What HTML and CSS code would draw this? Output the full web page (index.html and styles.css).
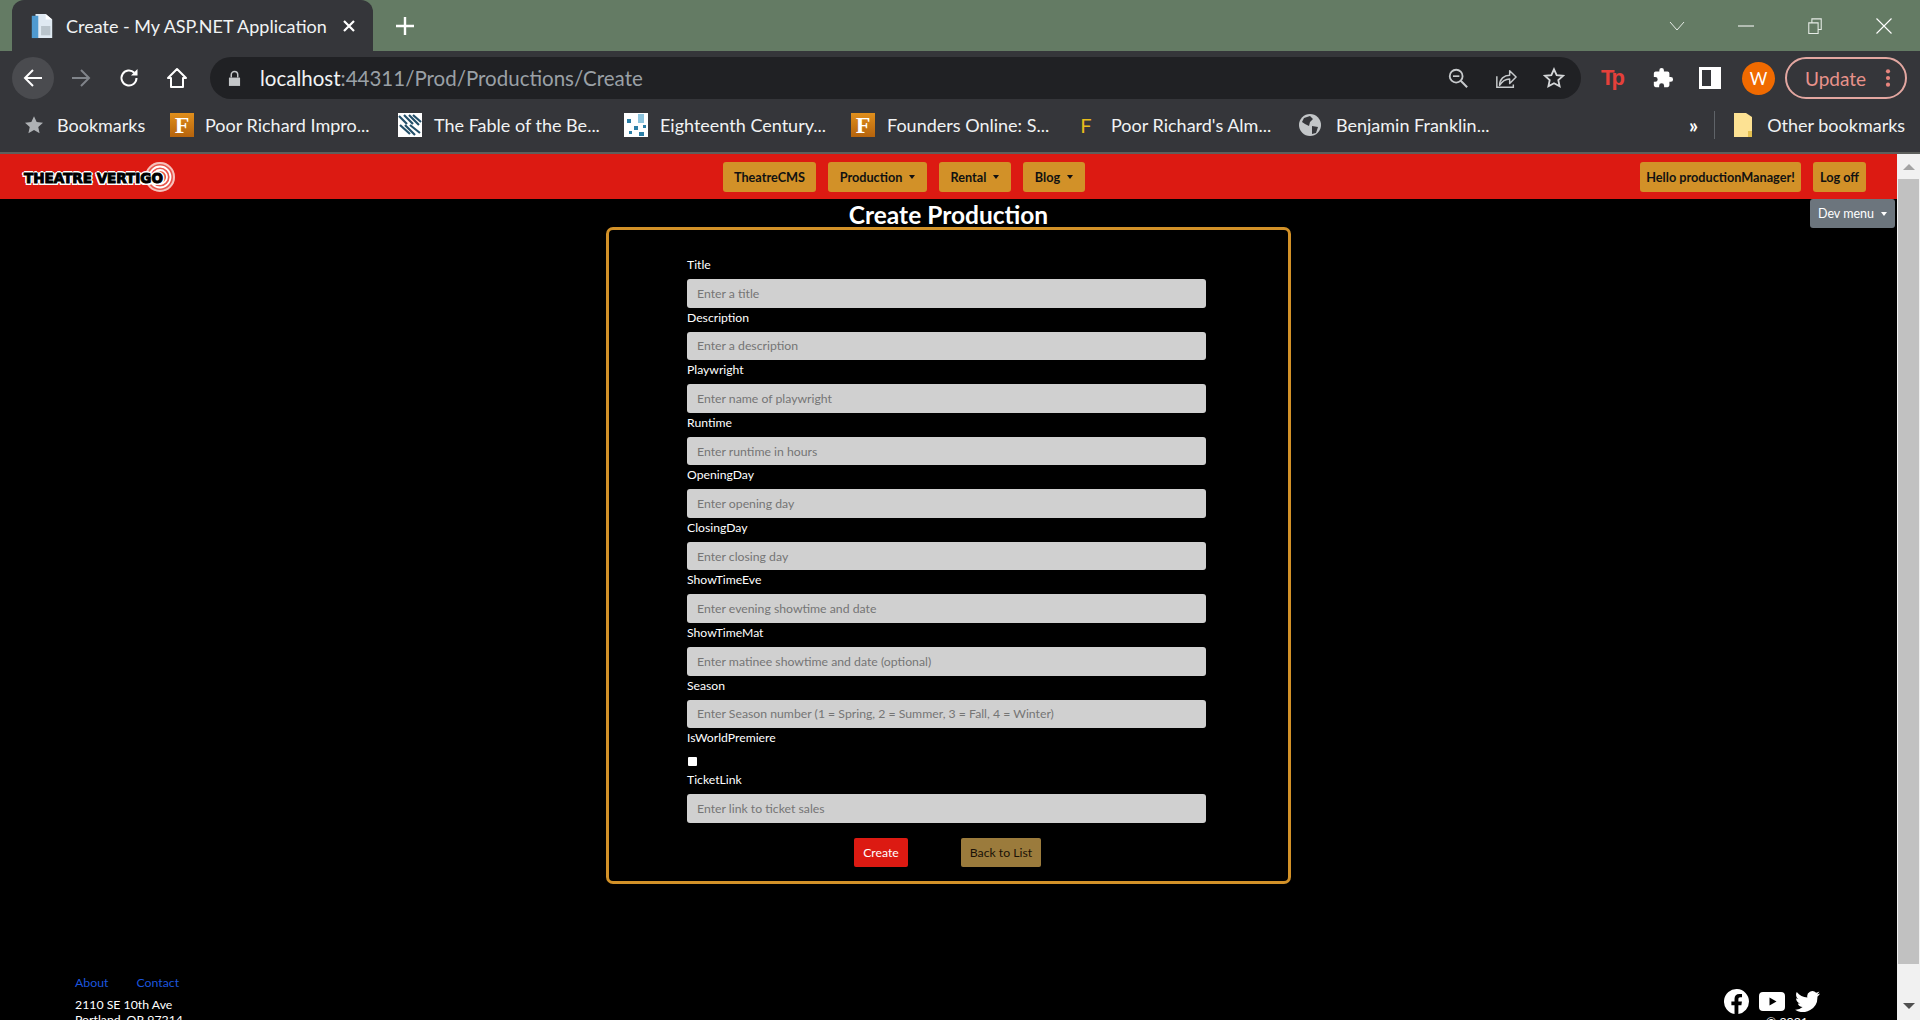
FILE: index.html
```html
<!DOCTYPE html>
<html lang="en">
<head>
  <meta charset="UTF-8" />
  <title>Create - My ASP.NET Application</title>
  <link rel="stylesheet" href="styles.css">
</head>
<body>
  <div class="tabstrip">
    <div class="tab">
      <svg class="tab-icon" viewBox="0 0 24 28"><path fill="#dfe9f2" d="M5 1h11l7 6v20H5z"/><path fill="#4f9ad0" d="M1 3h7v24H1z"/><path fill="#b9c4cc" d="M11 14h10v10H11z"/><path fill="#fff" d="M16 1l7 6h-7z"/></svg>
      <span class="tab-title">Create - My ASP.NET Application</span>
      <svg class="tab-close" viewBox="0 0 14 14"><path d="M2 2l10 10M12 2L2 12" stroke="#fff" stroke-width="2.2"/></svg>
    </div>
    <svg class="new-tab" viewBox="0 0 18 18"><path d="M9 0v18M0 9h18" stroke="#fff" stroke-width="2.4"/></svg>
    <div class="win-controls">
      <svg viewBox="0 0 16 10" class="win-chevron"><path d="M1 1l7 8 7-8" fill="none" stroke="#e6ece6" stroke-width="1"/></svg>
      <svg viewBox="0 0 16 16" class="win-btn"><path d="M0 8h16" stroke="#fff" stroke-width="1"/></svg>
      <svg viewBox="0 0 16 18" class="win-btn"><path d="M1 5.500h10.500v12H1zM4.500 5V1H15v12h-3.500" fill="none" stroke="#e6ece6" stroke-width="1.200"/></svg>
      <svg viewBox="0 0 16 16" class="win-btn"><path d="M0.500 0.500l15 15M15.500 0.500l-15 15" stroke="#fff" stroke-width="1.100"/></svg>
    </div>
  </div>

  <div class="toolbar">
    <div class="tool-btn tool-active">
      <svg viewBox="0 0 24 24" class="tool-icon"><path d="M21 12H4M12 4l-8 8 8 8" fill="none" stroke="#fff" stroke-width="2"/></svg>
    </div>
    <div class="tool-btn">
      <svg viewBox="0 0 24 24" class="tool-icon"><path d="M3 12h17M12 4l8 8-8 8" fill="none" stroke="#80848a" stroke-width="2"/></svg>
    </div>
    <div class="tool-btn">
      <svg viewBox="0 0 24 24" class="tool-icon"><path d="M19.500 12a7.500 7.500 0 1 1-2.200-5.300" fill="none" stroke="#fff" stroke-width="2"/><path d="M20.500 3v6.500H14z" fill="#fff"/></svg>
    </div>
    <div class="tool-btn">
      <svg viewBox="0 0 24 24" class="tool-icon"><path d="M12 3L3 12h3v9h12v-9h3z" fill="none" stroke="#fff" stroke-width="2" stroke-linejoin="round"/></svg>
    </div>
    <div class="omnibox">
      <svg viewBox="0 0 14 18" class="lock"><path d="M1 8h12v9H1z" fill="#c4c7c9"/><path d="M3.500 8V5a3.500 3.500 0 0 1 7 0v3" fill="none" stroke="#c4c7c9" stroke-width="1.600"/></svg>
      <span class="url"><span class="url-host">localhost</span>:44311/Prod/Productions/Create</span>
      <div class="omni-icons">
        <svg viewBox="0 0 24 24" class="omni-icon"><circle cx="10" cy="10" r="7" fill="none" stroke="#c7cacc" stroke-width="2"/><path d="M15 15l7 7" stroke="#c7cacc" stroke-width="2.200"/><path d="M6.500 10h7" stroke="#c7cacc" stroke-width="1.800"/></svg>
        <svg viewBox="0 0 24 24" class="omni-icon"><path d="M2 10v12h18v-3" fill="none" stroke="#c7cacc" stroke-width="1.600"/><path d="M5 20c0-7 5-11 11-11V4l7 7-7 7v-5c-5 0-8 2-11 7z" fill="none" stroke="#c7cacc" stroke-width="1.600" stroke-linejoin="round"/></svg>
        <svg viewBox="0 0 24 24" class="omni-icon"><path d="M12 2.500l2.900 6.300 6.900.8-5.100 4.700 1.400 6.800-6.100-3.400-6.100 3.400 1.400-6.800L2.200 9.600l6.900-.8z" fill="none" stroke="#d5d7d9" stroke-width="2"/></svg>
      </div>
    </div>
    <div class="ext-icons">
      <span class="ext-tp">Tp</span>
      <svg viewBox="0 0 24 24" class="ext-icon"><path fill="#fff" d="M20.500 11H19V7a2 2 0 0 0-2-2h-4V3.500a2.500 2.500 0 0 0-5 0V5H4a2 2 0 0 0-2 2v3.800h1.500a2.700 2.700 0 0 1 0 5.400H2V20a2 2 0 0 0 2 2h3.800v-1.500a2.700 2.700 0 0 1 5.400 0V22H17a2 2 0 0 0 2-2v-4h1.500a2.500 2.500 0 0 0 0-5z"/></svg>
      <svg viewBox="0 0 22 22" class="ext-icon"><path fill="#fff" fill-rule="evenodd" d="M0 0h22v22H0zM3 3v16h9V3z"/></svg>
      <span class="avatar">W</span>
      <div class="update">
        <span>Update</span>
        <svg viewBox="0 0 6 24" class="update-dots"><circle cx="3" cy="4" r="2.500"/><circle cx="3" cy="12" r="2.500"/><circle cx="3" cy="20" r="2.500"/></svg>
      </div>
    </div>
  </div>

  <div class="bookmarks">
    <div class="bm bm-first">
      <svg viewBox="0 0 24 24" class="bm-star"><path fill="#aeb1b4" d="M12 1.500l3.200 7 7.600.8-5.700 5.100 1.600 7.500L12 18.100l-6.700 3.800 1.600-7.500-5.700-5.100 7.600-.8z"/></svg>
      <span class="bm-text bm-w-bookmarks">Bookmarks</span>
    </div>
    <div class="bm">
      <span class="fav-f">F</span>
      <span class="bm-text bm-w-a">Poor Richard Impro...</span>
    </div>
    <div class="bm">
      <svg viewBox="0 0 24 24" class="fav"><path fill="#fff" d="M0 0h24v24H0z"/><path d="M1 3l8 8M6 2l9 9M11 2l10 10M15 2l8 7M2 12l10 9M7 12l10 10M12 12l10 8" stroke="#24506a" stroke-width="2.200"/></svg>
      <span class="bm-text bm-w-b">The Fable of the Be...</span>
    </div>
    <div class="bm">
      <svg viewBox="0 0 24 24" class="fav"><path fill="#fff" d="M0 0h24v24H0z"/><path fill="#8cc4de" d="M14 1h6v9h-6z"/><path fill="#2b7ea6" d="M3 6h4v4H3zM10 13h4v4h-4zM15 19h5v4h-5zM5 18h3v3H5zM19 12h3v3h-3z"/></svg>
      <span class="bm-text bm-w-c">Eighteenth Century...</span>
    </div>
    <div class="bm">
      <span class="fav-f">F</span>
      <span class="bm-text bm-w-d">Founders Online: S...</span>
    </div>
    <div class="bm">
      <span class="fav-thin">F</span>
      <span class="bm-text bm-w-e">Poor Richard's Alm...</span>
    </div>
    <div class="bm">
      <svg viewBox="0 0 24 24" class="fav"><circle cx="12" cy="12" r="11" fill="#c3c6c8"/><path fill="#35363a" d="M6 5l6-2 3 3-3 3-1 4-4-2-3-2zM14 13l6 1-2 6-4 1z"/></svg>
      <span class="bm-text bm-w-f">Benjamin Franklin...</span>
    </div>
    <span class="bm-more">»</span>
    <span class="bm-sep"></span>
    <div class="bm">
      <svg viewBox="0 0 18 24" class="bm-folder"><path fill="#fde293" d="M0 0h12l6 4v20H0z"/><path fill="#e4c04f" d="M14 18h4v6h-4z"/></svg>
      <span class="bm-text bm-w-other">Other bookmarks</span>
    </div>
  </div>

  <div class="window">
    <div class="page">
      <nav class="navbar">
        <a class="brand">
          <svg viewBox="0 0 32 32" class="brand-mark"><circle cx="16" cy="16" r="15" fill="#e8564d"/><circle cx="16" cy="16" r="14" fill="none" stroke="#f6c2bc" stroke-width="2"/><circle cx="16" cy="16" r="10.500" fill="none" stroke="#fff" stroke-width="1.800"/><circle cx="16" cy="16" r="7" fill="none" stroke="#fff" stroke-width="1.800"/></svg>
          <span class="brand-text">THEATRE VERTIGO</span>
        </a>
        <div class="nav-main">
          <a class="nav-btn nav-w-cms">TheatreCMS</a>
          <a class="nav-btn nav-w-prod caret">Production</a>
          <a class="nav-btn nav-w-rental caret">Rental</a>
          <a class="nav-btn nav-w-blog caret">Blog</a>
        </div>
        <div class="nav-user">
          <a class="nav-btn nav-w-hello">Hello productionManager!</a>
          <a class="nav-btn nav-w-logoff">Log off</a>
        </div>
      </nav>

      <button class="dev-menu caret" type="button">Dev menu</button>

      <main class="content">
        <h2 class="page-title">Create Production</h2>
        <form class="create-form">
          <div class="field">
            <label>Title</label>
            <input type="text" placeholder="Enter a title" />
          </div>
          <div class="field">
            <label>Description</label>
            <input type="text" placeholder="Enter a description" />
          </div>
          <div class="field">
            <label>Playwright</label>
            <input type="text" placeholder="Enter name of playwright" />
          </div>
          <div class="field">
            <label>Runtime</label>
            <input type="text" placeholder="Enter runtime in hours" />
          </div>
          <div class="field">
            <label>OpeningDay</label>
            <input type="text" placeholder="Enter opening day" />
          </div>
          <div class="field">
            <label>ClosingDay</label>
            <input type="text" placeholder="Enter closing day" />
          </div>
          <div class="field">
            <label>ShowTimeEve</label>
            <input type="text" placeholder="Enter evening showtime and date" />
          </div>
          <div class="field">
            <label>ShowTimeMat</label>
            <input type="text" placeholder="Enter matinee showtime and date (optional)" />
          </div>
          <div class="field">
            <label>Season</label>
            <input type="text" placeholder="Enter Season number (1 = Spring, 2 = Summer, 3 = Fall, 4 = Winter)" />
          </div>
          <div class="field">
            <label>IsWorldPremiere</label>
            <div class="check-row"><span class="check"></span></div>
          </div>
          <div class="field">
            <label>TicketLink</label>
            <input type="text" placeholder="Enter link to ticket sales" />
          </div>
          <div class="form-actions">
            <button class="btn-create" type="button">Create</button>
            <a class="btn-back">Back to List</a>
          </div>
        </form>
      </main>

      <footer class="footer">
        <div class="footer-left">
          <div class="footer-links"><a>About</a><a>Contact</a></div>
          <div class="address">2110 SE 10th Ave<br>Portland, OR 97214</div>
        </div>
        <div class="footer-right">
          <div class="social">
            <svg viewBox="0 0 24 24" class="social-fb"><path fill="#fff" d="M24 12a12 12 0 1 0-13.900 11.900v-8.400H7.100V12h3V9.400c0-3 1.800-4.700 4.500-4.700 1.300 0 2.700.2 2.700.2v3h-1.500c-1.500 0-2 .9-2 1.900V12h3.400l-.5 3.500h-2.900v8.400A12 12 0 0 0 24 12z"/></svg>
            <svg viewBox="0 0 26 19" class="social-yt"><path fill="#fff" fill-rule="evenodd" d="M4 0h18a4 4 0 0 1 4 4v11a4 4 0 0 1-4 4H4a4 4 0 0 1-4-4V4a4 4 0 0 1 4-4zM10.500 5.500v8l7-4z"/></svg>
            <svg viewBox="0 0 24 20" class="social-tw"><path fill="#fff" d="M24 2.400c-.9.400-1.800.7-2.800.8 1-.6 1.800-1.600 2.200-2.700-1 .6-2 1-3.100 1.200A4.900 4.900 0 0 0 11.900 6.200C7.800 6 4.200 4 1.700.9.400 3.200 1 6.100 3.200 7.500c-.8 0-1.600-.2-2.200-.6 0 2.400 1.600 4.400 3.900 4.900-.7.200-1.500.2-2.200.1.600 2 2.400 3.400 4.600 3.400A9.900 9.900 0 0 1 0 17.800 13.900 13.900 0 0 0 21.500 5.400c1-.7 1.800-1.600 2.500-3z"/></svg>
          </div>
          <div class="copyright">© 2021</div>
        </div>
      </footer>
    </div>

    <div class="scrollbar">
      <span class="scroll-up"></span>
      <span class="scroll-thumb"></span>
      <span class="scroll-down"></span>
    </div>
  </div>
</body>
</html>
```

FILE: styles.css
```css
*, *::before, *::after { box-sizing: border-box; }
html, body {
  height: 100%;
  margin: 0;
  overflow: hidden;
}
body {
  display: flex;
  flex-direction: column;
  background-color: #000;
  font-family: Lato, "Open Sans", sans-serif;
  color: #fff;
}

/* browser chrome */
.tabstrip {
  height: 51px;
  flex: none;
  display: flex;
  align-items: flex-start;
  background-color: #647b64;
}
.tab {
  width: 361px;
  height: 51px;
  margin-left: 12px;
  padding: 0 17px 0 18px;
  display: flex;
  align-items: center;
  background-color: #35363a;
  border-radius: 12px 12px 0 0;
}
.tab-icon { width: 24px; height: 26px; }
.tab-title {
  margin-left: 12px;
  font-size: 18px;
  white-space: nowrap;
  color: #f1f3f4;
}
.tab-close {
  width: 14px;
  height: 14px;
  margin-left: auto;
}
.new-tab {
  width: 18px;
  height: 18px;
  margin: 17px 0 0 23px;
}
.win-controls {
  margin-left: auto;
  height: 51px;
  display: flex;
  align-items: center;
  padding-right: 28px;
}
.win-chevron { width: 16px; height: 10px; margin-right: 53px; }
.win-btn { width: 16px; height: 16px; margin-left: 53px; }
.win-chevron + .win-btn { margin-left: 0; }

.toolbar {
  height: 52px;
  flex: none;
  display: flex;
  align-items: center;
  padding: 2px 0 0 12px;
  background-color: #35363a;
}
.tool-btn {
  width: 42px;
  height: 42px;
  margin-right: 6px;
  display: flex;
  align-items: center;
  justify-content: center;
  border-radius: 50%;
}
.tool-active { background-color: #4a4b4f; }
.tool-icon { width: 24px; height: 24px; }
.omnibox {
  width: 1371px;
  height: 42px;
  margin-left: 6px;
  padding: 0 16px 0 18px;
  display: flex;
  align-items: center;
  background-color: #202124;
  border-radius: 21px;
}
.lock { width: 13px; height: 17px; }
.url {
  margin-left: 19px;
  font-size: 20.500px;
  color: #9aa0a6;
  white-space: nowrap;
}
.url-host { color: #f1f3f4; }
.omni-icons {
  margin-left: auto;
  display: flex;
  gap: 26px;
}
.omni-icon { width: 22px; height: 22px; }
.ext-icons {
  display: flex;
  align-items: center;
  margin-left: 20px;
}
.ext-tp {
  width: 26px;
  font-family: "Liberation Sans", sans-serif;
  font-size: 22px;
  font-weight: 700;
  color: #e5403a;
  letter-spacing: -3px;
}
.ext-icon { width: 22px; height: 22px; margin-left: 25px; }
.avatar {
  width: 33px;
  height: 33px;
  margin-left: 21px;
  display: flex;
  align-items: center;
  justify-content: center;
  background-color: #f06a00;
  border-radius: 50%;
  font-size: 17px;
}
.update {
  width: 122px;
  height: 42px;
  margin-left: 10px;
  padding: 0 14px 0 18px;
  display: flex;
  align-items: center;
  justify-content: space-between;
  border: 2px solid #e3a7a1;
  border-radius: 21px;
  font-size: 19px;
  color: #e8928b;
}
.update-dots { width: 6px; height: 20px; fill: #e8857e; }

.bookmarks {
  height: 51px;
  flex: none;
  display: flex;
  align-items: center;
  padding: 0 0 5px 24px;
  background-color: #35363a;
  border-bottom: 2px solid #5d5f5c;
}
.bm {
  display: flex;
  align-items: center;
  margin-left: 25px;
}
.bm-first { margin-left: 0; }
.bm-star { width: 20px; height: 20px; }
.bm-text {
  margin-left: 11px;
  font-size: 18px;
  white-space: nowrap;
  color: #f1f3f4;
}
.bm-w-bookmarks { width: 88px; margin-left: 13px; }
.bm-w-a { width: 168px; }
.bm-w-b { width: 165px; margin-left: 12px; }
.bm-w-c { width: 166px; margin-left: 12px; }
.bm-w-d { width: 162px; margin-left: 12px; }
.bm-w-e { width: 162px; margin-left: 13px; }
.bm-w-f { width: 153px; margin-left: 14px; }
.bm-w-other { margin-left: 15px; }
.fav { width: 24px; height: 24px; }
.fav-f {
  width: 24px;
  height: 24px;
  display: flex;
  align-items: center;
  justify-content: center;
  background: linear-gradient(#e08f1c, #b5630d);
  font-family: "Liberation Serif", serif;
  font-size: 24px;
  font-weight: 700;
  color: #fff;
}
.fav-thin {
  width: 24px;
  text-align: center;
  font-size: 20px;
  font-weight: 400;
  color: #e8bc1c;
}
.bm-more {
  margin-left: 200px;
  font-size: 20px;
  font-weight: 700;
}
.bm-sep {
  width: 1px;
  height: 28px;
  margin: 0 19px 0 16px;
  background-color: #5f6368;
}
.bm-folder { width: 18px; height: 24px; }
.bm-sep + .bm { margin-left: 0; }

/* page */
.window {
  flex: 1;
  min-height: 0;
  display: flex;
}
.page {
  position: relative;
  flex: 1;
  min-width: 0;
  overflow: hidden;
  background-color: #000;
}
.navbar {
  height: 45px;
  padding: 0 31px 0 22px;
  display: flex;
  align-items: center;
  background-color: #dc1a12;
}
.brand {
  width: 154px;
  height: 32px;
  padding: 3px 0 0 2px;
  display: flex;
  align-items: center;
  position: relative;
}
.brand-text {
  position: relative;
  font-family: "DejaVu Sans", sans-serif;
  font-size: 13.500px;
  font-weight: 700;
  color: #000;
  white-space: nowrap;
  -webkit-text-stroke: 1px #000;
  text-shadow: 2px 0 #fff, -2px 0 #fff, 0 2px #fff, 0 -2px #fff, 1.500px 1.500px #fff, -1.500px 1.500px #fff, 1.500px -1.500px #fff, -1.500px -1.500px #fff;
}
.brand-mark {
  position: absolute;
  right: 0;
  top: 0;
  width: 32px;
  height: 32px;
}
.nav-main {
  margin-left: 547px;
  display: flex;
  gap: 12px;
}
.nav-user {
  margin-left: auto;
  display: flex;
  gap: 12px;
}
.nav-btn {
  height: 30px;
  display: flex;
  align-items: center;
  justify-content: center;
  background-color: #d29128;
  border-radius: 3px;
  font-size: 12.700px;
  font-weight: 700;
  color: #111;
  white-space: nowrap;
}
.nav-w-cms { width: 93px; }
.nav-w-prod { width: 99px; }
.nav-w-rental { width: 72px; }
.nav-w-blog { width: 62px; }
.nav-w-hello { width: 161px; }
.nav-w-logoff { width: 53px; }
.caret::after {
  content: "";
  margin-left: 7px;
  border-top: 4px solid currentColor;
  border-left: 3.500px solid transparent;
  border-right: 3.500px solid transparent;
}
.dev-menu {
  position: absolute;
  top: 45px;
  right: 2px;
  width: 85px;
  height: 29px;
  padding: 0;
  display: flex;
  align-items: center;
  justify-content: center;
  background-color: #6c757d;
  border: none;
  border-radius: 3px;
  font-family: inherit;
  font-size: 12.500px;
  color: #fff;
}
.content {
  width: 685px;
  margin: 0 auto;
}
.page-title {
  height: 28px;
  margin: 0;
  text-align: center;
  font-size: 24.500px;
  font-weight: 700;
  line-height: 31px;
}
.create-form {
  height: 657px;
  padding: 25px 82px 0 78px;
  border: 3px solid #d29128;
  border-radius: 7px;
  background-color: #000;
}
.field label {
  display: block;
  height: 19.200px;
  margin-bottom: 4.800px;
  font-size: 12.200px;
  line-height: 19.200px;
}
.field input {
  display: block;
  width: 100%;
  height: 28.600px;
  padding: 0 10px;
  background-color: #d0d0d0;
  border: none;
  border-radius: 3px;
  font-family: inherit;
  font-size: 12.250px;
}
.field input::placeholder { color: #757575; opacity: 1; }
.check-row {
  height: 18px;
  padding-top: 5px;
}
.check {
  display: block;
  width: 9px;
  height: 9px;
  margin-left: 1px;
  background-color: #fff;
  border-radius: 1px;
}
.form-actions {
  margin-top: 15px;
  padding-left: 167px;
  display: flex;
  gap: 53px;
}
.btn-create,
.btn-back {
  height: 29px;
  display: flex;
  align-items: center;
  justify-content: center;
  border: none;
  border-radius: 2px;
  font-family: inherit;
  font-size: 12.250px;
}
.btn-create {
  width: 54px;
  padding: 0;
  background-color: #dc1a12;
  color: #fff;
}
.btn-back {
  width: 80px;
  background-color: #9b7b3c;
  color: #1a1206;
}
.footer {
  margin-top: 91px;
  padding: 0 77px 0 75px;
  display: flex;
  justify-content: space-between;
  font-size: 12.300px;
}
.footer-links {
  display: flex;
  gap: 28px;
}
.footer-links a { color: #1c55dd; }
.address {
  margin-top: 7px;
  line-height: 15px;
}
.footer-right {
  padding-top: 14px;
  text-align: center;
}
.social {
  display: flex;
  align-items: center;
  gap: 10px;
}
.social-fb { width: 25px; height: 25px; }
.social-yt { width: 26px; height: 19px; }
.social-tw { width: 25px; height: 21px; }
.copyright { padding-left: 30px; }

.scrollbar {
  width: 23px;
  flex: none;
  display: flex;
  flex-direction: column;
  align-items: center;
  background-color: #f1f1f1;
}
.scroll-up {
  margin-top: 10px;
  border-bottom: 6px solid #a3a3a3;
  border-left: 6px solid transparent;
  border-right: 6px solid transparent;
}
.scroll-thumb {
  width: 21px;
  height: 785px;
  margin-top: 9px;
  background-color: #c1c1c1;
}
.scroll-down {
  margin-top: 39px;
  border-top: 6px solid #505050;
  border-left: 6px solid transparent;
  border-right: 6px solid transparent;
}
```
